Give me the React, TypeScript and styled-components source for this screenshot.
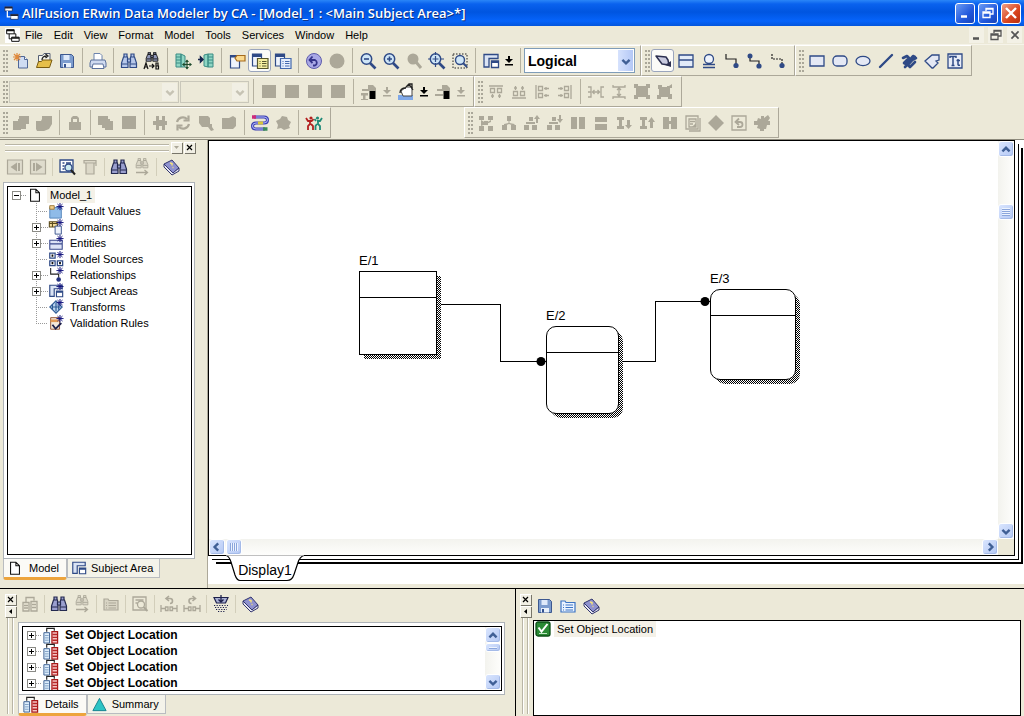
import React from "react";
import styled, { createGlobalStyle, css } from "styled-components";

const FACE = "#ece9d8";
const NAVY = "#2f4a86";
const DIM = "#aca899";
const UI = '"Liberation Sans", Arial, sans-serif';

const Global = createGlobalStyle`
  *, *::before, *::after { box-sizing: border-box; }
  body { margin: 0; background: ${FACE}; color: #000; font: 11px/16px ${UI}; }
  button, select { font: inherit; color: inherit; margin: 0; padding: 0; border: 0; background: none; }
  svg { display: block; flex: none; }
  ul { list-style: none; margin: 0; padding: 0; }
`;

/* ---------- icons ---------- */

const dimLine = { fill: "none", stroke: DIM, strokeWidth: 1.3 };
const binoculars = (c: string, fill: string) => (
  <g fill={fill} stroke={c} strokeWidth="1.2">
    <path d="M4 2h3v3H4zM11 2h3v3h-3zM3.500 5h4l.5 5v5.500H1.500V11zM10.500 5h4l2 6v4.500H10V10z" />
    <path d="M7.500 7h3v3h-3zM2 12h6M10 12h6.500" />
  </g>
);
const book = (
  <g>
    <path d="M2 6l8-4 7 8-6 5z" fill="#8f92cf" stroke="#33366e" />
    <path d="M2 6v3l8 8 7-4v-3l-6 5z" fill="#e8e8f4" stroke="#33366e" />
    <path d="M8 5l2 .5v2M10.500 9.500h1" stroke="#f5e27a" strokeWidth="1.5" fill="none" />
  </g>
);
const page = <path d="M4 2.500h6l4 4V16H4zM10 2.500v4h4" fill="#fff" stroke="#111" strokeWidth="1.2" />;
const subject = (
  <g>
    <path d="M2 2.500h14v4H7V15H2z" fill="#dbe4f4" stroke={NAVY} strokeWidth="1.3" />
    <path d="M9.500 9h7v6.500h-7z" fill="#fff" stroke={NAVY} strokeWidth="1.3" />
    <path d="M9.500 9h7v2h-7z" fill={NAVY} />
  </g>
);
const star = <path d="M13.500 0v8M9.500 4h8M10.700 1.200l5.600 5.600M16.300 1.200l-5.600 5.600" stroke="#11117c" strokeWidth="1.1" />;
const floppy = (
  <g>
    <path d="M2.500 2.500h11l2 2v11h-13z" fill="#7c9cce" stroke="#3d588f" />
    <path d="M5.500 3h6v5h-6z" fill="#dfeafa" />
    <path d="M5 11h8v4.500H5z" fill="#e9f1fb" />
    <path d="M6 12h2v3.500H6z" fill="#33518f" />
  </g>
);
const blobA = <path d="M1 7h5V5h1V2h10v8h-3v5H9v1H1z" fill={DIM} />;
const blobB = <path d="M1 7h5l1-2V2h10v8l-3 5-5 2H2l-1-2z" fill={DIM} />;
const lens = (c: string, fill: string, extra?: React.ReactNode) => (
  <g>
    <path d="M11 11l5.500 5.500" stroke={c} strokeWidth="2.600" />
    <circle cx="7.500" cy="7" r="5.200" fill={fill} stroke={c} strokeWidth="1.500" />
    {extra}
  </g>
);
const listDoc = (frame: string, fill: string) => (
  <g>
    <path d="M6.500 6.500h10.500v10H6.500z" fill={fill} stroke={frame} strokeWidth="1.2" />
    <path d="M8.500 9.500h1M11 9.500h4.500M8.500 11.500h1M11 11.500h4.500M8.500 14h1M11 14h4.500" stroke={frame} />
  </g>
);
const folderList = (c: string, fill: string) => (
  <g>
    <path d="M2 4h4l1 1.500h9V15H2z" fill={fill} stroke={c} strokeWidth="1.2" />
    <path d="M4 8h1M6.500 8h7.500M4 10.500h1M6.500 10.500h7.500M4 13h1M6.500 13h7.500" stroke={c} />
  </g>
);

const ICONS: Record<string, React.ReactNode> = {
  app: (
    <g>
      <path d="M2 2h9v5H2zM8 11h9v5H8z" fill="#fff" stroke="#111" strokeWidth="1.2" />
      <path d="M2 2h9v2H2zM8 11h9v2H8z" fill="#111" />
      <path d="M5 7v6h3M13 11V7h-2" fill="none" stroke="#111" strokeWidth="1.2" />
    </g>
  ),
  appLight: (
    <g>
      <path d="M1 1h9v5H1zM8 10h9v6H8z" fill="#fff" stroke="#16306e" />
      <path d="M1 1h9v2H1zM8 10h9v2H8z" fill="#223" />
      <path d="M4 6v7h4" fill="none" stroke="#fff" strokeWidth="1.500" />
    </g>
  ),
  newDoc: (
    <g>
      <path d="M6.500 4.500h6l3 3v8.500h-9z" fill="#cfdcf2" stroke="#4f6796" />
      <path d="M12.500 4.500v3h3" fill="#fff" stroke="#4f6796" />
      <path d="M5 1v8M1 5h8M2 2l6 6M8 2L2 8" stroke="#e08a3c" strokeWidth="1.200" />
    </g>
  ),
  open: (
    <g>
      <path d="M3.500 15V3.500h4l1.500-2h6V9" fill="#f6f6ee" stroke="#555f74" />
      <path d="M1.500 15.500l2-6h3l1-1.500h9.500l-2.500 7.500z" fill="#e6bf4a" stroke="#7a5c10" />
      <path d="M7 8c0-2.500 2-4 4.500-4M10.500 2L13 4l-2.500 2" fill="none" stroke="#222" strokeWidth="1.300" />
    </g>
  ),
  save: floppy,
  print: (
    <g>
      <path d="M5 8V1.500h6l2 2V8" fill="#fff" stroke="#6d84ad" />
      <path d="M2 8h14l1 3v4H1v-4z" fill="#cfdaf0" stroke="#5b719c" />
      <path d="M4 12h10l1 4.500H3z" fill="#fff" stroke="#5b719c" />
    </g>
  ),
  find: binoculars(NAVY, "#b7c8ea"),
  findDark: binoculars("#24294f", "#9a9fcf"),
  replace: (
    <g>
      <g transform="translate(2 -1) scale(.78 .66)">{binoculars("#111", "#8f97b8")}</g>
      <path d="M1 17l2-6 2 6M2 15h2M13 11v6h2.500v-3H13h2v-3zM6 14h5M9 12l2 2-2 2" fill="none" stroke="#111" strokeWidth="1.200" />
    </g>
  ),
  tableAdd: (
    <g>
      <path d="M2 2h5v13H2zM7 2l4 2v11H7z" fill="#8fd6c4" stroke="#3a8c84" />
      <path d="M2 5h5M2 8h5M2 11h5" stroke="#3a8c84" />
      <path d="M13 8.500v8M9 12.500h8" stroke="#1d4a2c" strokeWidth="1.200" />
      <path d="M11 10l2-2.500 2 2.500zM11 15l2 2.500 2-2.500zM10.500 10.500L8 12.500l2.500 2zM15.500 10.500l2.500 2-2.500 2z" fill="#1d4a2c" />
    </g>
  ),
  tableIn: (
    <g>
      <path d="M7 3l4-1v13l-4-1zM11 2h5v13h-5z" fill="#8fd6c4" stroke="#3a8c84" />
      <path d="M11 5h5M11 8h5M11 11h5" stroke="#3a8c84" />
      <path d="M1 7.500h5M3.500 5L6 7.500 3.500 10z" fill="#16244c" stroke="#16244c" strokeWidth="1.500" />
    </g>
  ),
  tagDoc: (
    <g>
      <path d="M2.500 3.500h9V16h-9z" fill="#eef3fc" stroke={NAVY} strokeWidth="1.200" />
      <path d="M2.500 3.500h9v2h-9z" fill={NAVY} />
      <path d="M7 6l2-2.500h8v5.500H9z" fill="#fbd98c" stroke="#a56a1c" strokeWidth="1.200" />
    </g>
  ),
  docYellow: (
    <g>
      <path d="M1.500 2h9v12h-9z" fill="#eef3fc" stroke={NAVY} strokeWidth="1.200" />
      <path d="M1.500 2h9v3h-9z" fill={NAVY} />
      {listDoc("#55552c", "#f6efa0")}
    </g>
  ),
  docBlue: (
    <g>
      <path d="M1.500 2h9v12h-9z" fill="#eef3fc" stroke={NAVY} strokeWidth="1.200" />
      <path d="M1.500 2h9v3h-9z" fill={NAVY} />
      {listDoc("#4469ae", "#e6effd")}
    </g>
  ),
  undo: (
    <g>
      <circle cx="9" cy="9" r="7.500" fill="#a9a8e6" stroke="#5e5cac" />
      <path d="M5 8h5a3 3 0 010 5.500H8M7.500 4.500L4.500 8l3 3" fill="none" stroke="#35338a" strokeWidth="1.800" />
    </g>
  ),
  dot: <circle cx="9" cy="9" r="7.500" fill={DIM} />,
  zoomOut: lens(NAVY, "#cfe6f7", <path d="M5 7h5" stroke={NAVY} strokeWidth="1.600" />),
  zoomIn: lens(NAVY, "#cfe6f7", <path d="M5 7h5M7.500 4.500v5" stroke={NAVY} strokeWidth="1.600" />),
  zoomDim: (
    <g>
      <path d="M11 10l5 6" stroke={DIM} strokeWidth="3" />
      <circle cx="8" cy="7" r="5.500" fill={DIM} />
    </g>
  ),
  zoomFit: lens(NAVY, "#cfe6f7", <path d="M4.500 7h6M7.500 4v6M7.500 0v3M7.500 11v4M0 7h3M12 7h4" stroke={NAVY} strokeWidth="1.200" />),
  zoomArea: (
    <g>
      <path d="M2 2h14v14H2z" fill="none" stroke="#222" strokeDasharray="1.500 1.500" />
      <circle cx="9" cy="8" r="4.500" fill="#cfe6f7" stroke={NAVY} strokeWidth="1.400" />
      <path d="M12 11l4 4" stroke={NAVY} strokeWidth="2" />
    </g>
  ),
  subject,
  pointer: (
    <g>
      <path d="M2 4l10 1 2 3 1 5-7-1z" fill="#c9cbe0" stroke="#2c3050" strokeWidth="1.500" strokeLinejoin="round" />
      <path d="M11 13l6-4v6z" fill="#2c3050" />
    </g>
  ),
  entity: (
    <g>
      <path d="M2 3h14v12H2z" fill="#e3ebf8" stroke={NAVY} strokeWidth="1.300" />
      <path d="M2 8h14" stroke={NAVY} strokeWidth="1.500" />
    </g>
  ),
  category: (
    <g>
      <circle cx="9" cy="7" r="4.500" fill="#eef3fc" stroke={NAVY} strokeWidth="1.300" />
      <path d="M3 12.500h12M3 15.500h12" stroke={NAVY} strokeWidth="1.400" />
    </g>
  ),
  relation: (
    <g>
      <path d="M3 2v5h10v5" fill="none" stroke="#222" strokeWidth="1.200" />
      <circle cx="13" cy="13.500" r="2.600" fill={NAVY} />
    </g>
  ),
  relationMany: (
    <g>
      <path d="M4 4v5h9v4" fill="none" stroke="#222" strokeWidth="1.200" />
      <circle cx="4" cy="4" r="2.500" fill={NAVY} />
      <circle cx="13" cy="14" r="2.600" fill={NAVY} />
    </g>
  ),
  relationDash: (
    <g>
      <path d="M3 2v5h10v5" fill="none" stroke="#222" strokeWidth="1.200" strokeDasharray="2 1" />
      <circle cx="13" cy="13.500" r="2.600" fill={NAVY} />
    </g>
  ),
  rect: <path d="M2 4h14v10H2z" fill="#e4e8f4" stroke={NAVY} strokeWidth="1.300" />,
  roundRect: <rect x="2" y="4" width="14" height="10" rx="4" fill="#e4e8f4" stroke={NAVY} strokeWidth="1.300" />,
  ellipse: <ellipse cx="9" cy="9" rx="7" ry="4.600" fill="#e4e8f4" stroke={NAVY} strokeWidth="1.300" />,
  stroke: <path d="M3 15L15 3" stroke={NAVY} strokeWidth="2.400" strokeLinecap="round" />,
  scribble: <path d="M3 6l4-2 2 2-5 5 2 1 7-8 2 1-7 8 2 2 5-5M5 15l3-3M12 8l4-2" stroke={NAVY} strokeWidth="2.600" strokeLinecap="round" strokeLinejoin="round" fill="none" />,
  polygon: <path d="M2 9l7-6 7 0v5l-3 1 2 2-5 5h-1z" fill="#e4e8f4" stroke={NAVY} strokeWidth="1.300" />,
  textBox: (
    <g>
      <path d="M2 2h14v14H2z" fill="#e8ecf7" stroke={NAVY} strokeWidth="1.300" />
      <path d="M4 6V4.500h6V6M7 4.500V13M5.500 13.500h3M12 7v5.500q0 1 2 .8M10.500 8.500H14" fill="none" stroke={NAVY} strokeWidth="1.500" />
    </g>
  ),
  square: <path d="M2 2h14v13H2z" fill={DIM} />,
  textColor: (
    <g>
      <path d="M8 2h5l3 3v3H8zM2 6h8v2H2zM1 10h7v2.500H5.500V16H8v1H1v-1h2v-3.500H1z" fill={DIM} />
      <path d="M9.500 8h6v8h-6z" fill="#000" />
    </g>
  ),
  fillColor: (
    <g>
      <path d="M1 12h15v5H1z" fill="#7fa8e8" />
      <path d="M4 8l5-4h6v9H6z" fill="#fff" stroke="#444" />
      <path d="M3 10c0-4 3-5 6-5M9 4l3-3h3v5M12 1l4 6" fill="none" stroke="#222" strokeWidth="1.300" />
    </g>
  ),
  lineColor: (
    <g>
      <path d="M8 2h5l3 3v3H8zM3 6h8v2H3zM1 11h8v2H1z" fill={DIM} />
      <path d="M9.500 8h6v8h-6z" fill="#000" />
    </g>
  ),
  alignTop: <path d="M2 3h14M3.500 5.500h4v4h-4zM10.500 5.500h4v4h-4zM5.500 11v4M12.500 11v4M4 13h3M11 13h3" {...dimLine} />,
  alignBottom: <path d="M2 15h14M3.500 8.500h4v4h-4zM10.500 8.500h4v4h-4zM5.500 3v4M12.500 3v4M4 5h3M11 5h3" {...dimLine} />,
  alignLeft: <path d="M3 2v14M5.500 3.500h4v4h-4zM5.500 10.500h4v4h-4zM11 5.500h5M11 12.500h5M13 4v3M13 11v3" {...dimLine} />,
  alignRight: <path d="M15 2v14M8.500 3.500h4v4h-4zM8.500 10.500h4v4h-4zM2 5.500h5M2 12.500h5M5 4v3M5 11v3" {...dimLine} />,
  spaceH: <path d="M1 4h3v10H1M1 9h3M17 4h-3v10h3M6 9h6M7.500 7L5.500 9l2 2M10.500 7l2 2-2 2" {...dimLine} />,
  spaceV: <path d="M3 2v2h12V2M3 16v-2h12v2M9 5v8M7 7l2-2 2 2M7 11l2 2 2-2" {...dimLine} />,
  group: <path d="M1 1h4v2h8V1h4v4h-2v7h2v4h-4v-2H5v2H1v-4h2V5H1z" fill={DIM} />,
  ungroup: <path d="M2 2h4v2h5V3h2l3-2v4h-2v6h2v5h-4v-2H5v2H1v-4h2V6H2z" fill={DIM} />,
  blobA,
  blobB,
  lock: <path d="M3 8h2V4l2-2h4l2 2v4h2v8H3zM7 8h4V5H7z" fill={DIM} fillRule="evenodd" />,
  overlap: <path d="M1 2h10v3h2v2h3v9H8v-2H5v-3H1z" fill={DIM} />,
  hash: <path d="M5 2h3v4h3V2h3v5h2v4h-2v5h-3v-4H8v4H5v-5H2V7h3z" fill={DIM} />,
  refresh: <path d="M3 8a6 6 0 0110-3M15 10a6 6 0 01-10 3M14.500 1.500v5h-5M3.500 16.500v-5h5" fill="none" stroke={DIM} strokeWidth="2.200" />,
  blobC: <path d="M2 2h9l2 2v6h2v3l2 3-3 1-3-4H5L2 9z" fill={DIM} />,
  blobD: <path d="M2 4h7l4-2 3 2v8l-3 3H2z" fill={DIM} />,
  blobE: <path d="M2 7l4-2 2-3 5 1 1 3 3 2-2 4 1 2-6 2-3-2-4 1 1-4z" fill={DIM} />,
  snake: (
    <g fill="none">
      <path d="M3 3h10q3.500 0 3.500 3T13 9H5q-3.500 0-3.500 3T5 15h9" stroke="#3a3fb0" strokeWidth="3" />
      <path d="M3 3h10q3.500 0 3.500 3T13 9H5q-3.500 0-3.500 3T5 15h9" stroke="#b4b9ff" strokeWidth="1" />
      <path d="M1 3h4" stroke="#cf2a7a" strokeWidth="3.500" />
      <path d="M7 9h5" stroke="#d8c63a" strokeWidth="3" />
      <path d="M12 15h4.500" stroke="#3c8a5a" strokeWidth="3.500" />
    </g>
  ),
  people: (
    <g>
      <circle cx="6" cy="4" r="1.600" fill="#b32020" />
      <circle cx="12.500" cy="4" r="1.600" fill="#1f8a78" />
      <path d="M1 4l2 3h4M5 6v4l-2 2v4M6 10l2 2v4M7 7l1.500-2" stroke="#b32020" strokeWidth="1.800" fill="none" />
      <path d="M17 4l-2 3h-3M13 6v4l2 2v4M12 10l-1.500 2v4M11 7L9.500 5" stroke="#1f8a78" strokeWidth="1.800" fill="none" />
    </g>
  ),
  treeBig: <path d="M2 2h5v4H2zM11 2h5v4h-5zM7 7h4v4H7zM2 12h5v5H2zM11 12h5v5h-5zM4 6l5 3 5-3v2l-5 2-5 2z" fill={DIM} />,
  tree: <path d="M7 2h4v5H7zM2 11h5v5H2zM11 11h5v5h-5zM8.500 7h1v2l5 1v2l-5.500-2L4 12v-2l4.500-1z" fill={DIM} />,
  treeUp: <path d="M6 3h4v4H6zM1 11h5v5H1zM9 11h5v5H9zM3 8h9v2H3zM14 1l3 4h-2v4h-2V5h-2z" fill={DIM} />,
  treeDown: <path d="M6 3h4v4H6zM1 11h5v5H1zM9 11h5v5H9zM3 8h9v2H3zM13 1h2v4h2l-3 4-3-4h2z" fill={DIM} />,
  colsTwo: <path d="M2 3h6v12H2zM10 3h6v12h-6z" fill={DIM} />,
  rowsTwo: <path d="M3 3h12v5H3zM3 10h12v6H3z" fill={DIM} />,
  colDown: <path d="M2 3h7v3H7v6h2v3H2v-3h2V6H2zM12 6h3v5h2l-3.500 4L10 11h2z" fill={DIM} />,
  colUp: <path d="M2 3h7v3H7v6h2v3H2v-3h2V6H2zM12 14h3V8h2l-3.500-5L10 8h2z" fill={DIM} />,
  beam: <path d="M2 3h6v4h2V3h6v12h-6v-5H8v5H2z" fill={DIM} />,
  note: (
    <g>
      <path d="M2 2h12v13H2zM5 5h7v8H5zM6 7.500h5M6 10h3M16 4v13H5" {...dimLine} />
      <path d="M8 13l4-4v4z" fill={DIM} />
    </g>
  ),
  diamond: <path d="M9 1l8 8-8 8-8-8z" fill={DIM} />,
  back: (
    <g>
      <path d="M2 2h14v14H2z" {...dimLine} />
      <path d="M7 13h3q2.500 0 2.500-2.500T10 8H6M9 4.500L5.500 8 9 11" fill="none" stroke={DIM} strokeWidth="1.800" />
    </g>
  ),
  cross: <path d="M8 2h3v2l4-3 2 3-2 3h2v4h-3l-1 4h-2v2H7v-2L4 14l1-3H1V7h3l1-3 3 1z" fill={DIM} />,
  prev: (
    <g>
      <path d="M1.500 2h15v14h-15z" fill="#dfdccd" stroke={DIM} strokeWidth="1.200" />
      <path d="M11 4.500v9L4.500 9zM12 5h2v8h-2z" fill={DIM} />
    </g>
  ),
  next: (
    <g>
      <path d="M1.500 2h15v14h-15z" fill="#dfdccd" stroke={DIM} strokeWidth="1.200" />
      <path d="M7 4.500v9L13.500 9zM4 5h2v8H4z" fill={DIM} />
    </g>
  ),
  inspect: (
    <g>
      <path d="M2 2h13v12H2zM4.500 5h2M8 5h5M4.500 8h2M4.500 11h2" fill="#fff" stroke={NAVY} strokeWidth="1.300" />
      <circle cx="10.500" cy="9.500" r="3.500" fill="#cdebf0" stroke={NAVY} strokeWidth="1.300" />
      <path d="M13 12l4 4.500" stroke="#222" strokeWidth="2" />
    </g>
  ),
  trash: <path d="M3 2.500h12v2.500H3zM5 5.500V16h8V5.500M15 5v3" fill="#dcd8c8" stroke={DIM} strokeWidth="1.200" />,
  findNext: (
    <g>
      <g transform="translate(2 -1) scale(.78 .7)">{binoculars(DIM, "#dcd8c8")}</g>
      <path d="M3 14.500h11M11.500 12l3 2.500-3 2.500" {...dimLine} />
    </g>
  ),
  book,
  page,
  copyPair: <path d="M2 7.500h6V16H2zM10 6.500h6V16h-6zM5 7V2.500h8v3M3 10.500h4M3 13h4M11 9.500h4M11 12.500h4" {...dimLine} />,
  listDim: folderList(DIM, "#d8d4c4"),
  inspectDim: (
    <g>
      <path d="M2 2h13v13H2zM4.500 5h8M4.500 8h2" {...dimLine} />
      <circle cx="10" cy="9.500" r="3.500" {...dimLine} />
      <path d="M12.500 12l4 4" stroke={DIM} strokeWidth="2" />
    </g>
  ),
  undoDim: (
    <g>
      <path d="M1 10v7M17 10v7M1 13.500h4M13 13.500h4M5.500 12h2.500v3.500H5.500zM10 12h2.500v3.500H10z" {...dimLine} />
      <path d="M9 1L6 3.500 9 6M6.500 3.500H10q2.500 0 2.500 2.500T10 8.500" fill="none" stroke={DIM} strokeWidth="1.600" />
    </g>
  ),
  redoDim: (
    <g>
      <path d="M1 10v7M17 10v7M1 13.500h4M13 13.500h4M5.500 12h2.500v3.500H5.500zM10 12h2.500v3.500H10z" {...dimLine} />
      <path d="M9.500 1l3 2.500-3 2.500M12 3.500H8.500Q6 3.500 6 6t2.500 2.500" fill="none" stroke={DIM} strokeWidth="1.600" />
    </g>
  ),
  filter: (
    <g>
      <path d="M2 2.500h14l-2.500 5.500h-9z" fill="#a9b0d4" stroke="#1c1f4a" strokeWidth="1.200" />
      <path d="M9 0v7M6.500 4.500L9 7l2.500-2.500" fill="none" stroke="#1c1f4a" strokeWidth="1.300" />
      <path d="M2 10.500h14M3 12.500h12M4 14.500h11M6 16.500h7" stroke="#1c1f4a" strokeDasharray="1.200 1.400" />
    </g>
  ),
  folderBlue: folderList("#3d74c4", "#eaf3ff"),
  change: (
    <g>
      <path d="M2 6h6v11H2z" fill="#dcecfb" stroke="#3a5f92" />
      <path d="M3 9h4M3 11.500h4M3 14h4" stroke="#7f9fc4" />
      <path d="M10.500 5h6v12h-6z" fill="#f6c4c4" stroke="#a81818" strokeWidth="1.300" />
      <path d="M11 8h5M11 11h5M11 14h5" stroke="#b82828" strokeWidth="1.500" />
      <path d="M5 5V1.500h8V4" fill="none" stroke="#222" strokeWidth="1.200" />
    </g>
  ),
  triangle: <path d="M9 2.500l7 13H2z" fill="#2cc4c4" stroke="#15808c" />,
  check: (
    <g>
      <rect x="2" y="2" width="14" height="14" rx="2" fill="#2a8a34" stroke="#0d4f16" strokeWidth="1.300" />
      <path d="M4.500 7.500l3 4 6-7.500" fill="none" stroke="#fff" strokeWidth="2" />
      <path d="M5 13.500h8" stroke="#bfe6c2" />
    </g>
  ),
  defaults: (
    <g>
      <path d="M2 5h13v12H2z" fill="#8fbbe8" stroke="#4f7fb8" />
      <path d="M2 3h5v4H2z" fill="#f2d08c" stroke="#9a7430" />
      {star}
    </g>
  ),
  domains: (
    <g>
      <path d="M1.500 3h9v6h-9zM1.500 5h9M5 3v6" fill="#f3dc9a" stroke="#5a4a1c" strokeWidth="1.200" />
      <path d="M8 8h7v9H8z" fill="#eef3fc" stroke={NAVY} />
      {star}
    </g>
  ),
  entities: (
    <g>
      <path d="M2 6h14v10H2zM2 10h14" fill="#dce3f6" stroke="#39488c" strokeWidth="1.200" />
      {star}
    </g>
  ),
  sources: (
    <g>
      <path d="M2 2.500h6v5.500H2zM2 11h6v5.500H2zM10.500 11h6v5.500h-6z" fill="#fff" stroke={NAVY} strokeWidth="1.400" />
      <path d="M4 4h2v2.500H4zM4 12.500h2v2.500H4zM12.500 12.500h2v2.500h-2z" fill="#111" />
      {star}
    </g>
  ),
  relations: (
    <g>
      <path d="M3 1v7h9v4" fill="none" stroke="#222" strokeWidth="1.200" />
      <circle cx="12" cy="14" r="2.600" fill="#22307c" />
      {star}
    </g>
  ),
  areas: (
    <g>
      {subject}
      {star}
    </g>
  ),
  transforms: (
    <g>
      <path d="M9 2l7 7-7 7-7-7z" fill="#bcd6f0" stroke="#2c5a94" strokeWidth="1.200" />
      <path d="M4 9h10M9 4v10M5 6v6M12 7v5" stroke="#2c5a94" strokeWidth="1.300" />
      {star}
    </g>
  ),
  rules: (
    <g>
      <path d="M3 3h10v13H3z" fill="#f3e8dc" stroke="#8a4a2a" />
      <path d="M3 5h9v3H3z" fill="#e29a56" />
      <path d="M5 11l3.500 4.500L15 9" fill="none" stroke="#1c1f4a" strokeWidth="2" />
      {star}
    </g>
  ),
};

const Icon = ({ name, size = 18 }: { name: string; size?: number }) => (
  <svg width={size} height={size} viewBox="0 0 18 18" aria-hidden="true">
    {ICONS[name]}
  </svg>
);

const ARROWS = { up: "M2 7l3-3 3 3", down: "M2 4l3 3 3-3", left: "M6 2L3 5l3 3", right: "M4 2l3 3-3 3" };
const Chevron = ({ to, color = "#3f5f95" }: { to: keyof typeof ARROWS; color?: string }) => (
  <svg width="12" height="12" viewBox="0 0 10 10" aria-hidden="true">
    <path d={ARROWS[to]} fill="none" stroke={color} strokeWidth="2" />
  </svg>
);
const DropMark = ({ color }: { color: string }) => (
  <svg width="8" height="10" viewBox="0 0 8 10" aria-hidden="true">
    <path d="M3 0h2v3h3L4 7 0 3h3zM0 8h8v1.500H0z" fill={color} />
  </svg>
);

/* ---------- window frame ---------- */

const Shell = styled.div`
  display: flex;
  flex-direction: column;
  height: 100vh;
  overflow: hidden;
`;

const TitleBar = styled.header`
  display: flex;
  align-items: center;
  gap: 3px;
  height: 26px;
  padding: 0 3px 0 4px;
  color: #fff;
  background: linear-gradient(#2a86f8 0, #0a62ee 4px, #0055e0 12px, #0664fb 21px, #0456dc 26px);
`;

const Title = styled.h1`
  flex: 1;
  margin: 0;
  font: 600 13px/20px "Open Sans", "Noto Sans", sans-serif;
  white-space: nowrap;
  text-shadow: 1px 1px 0 #0b2f80;
`;

const FrameButton = styled.button<{ $danger?: boolean }>`
  display: grid;
  place-items: center;
  width: 20px;
  height: 21px;
  border: 1px solid #fff;
  border-radius: 3px;
  background: ${(p) => (p.$danger ? "linear-gradient(135deg, #f0a088, #d8431c 60%, #b83010)" : "linear-gradient(135deg, #6c9cf4, #2158dc 60%, #1844b8)")};
`;

const MenuBar = styled.nav`
  display: flex;
  align-items: center;
  height: 19px;
  padding: 0 2px 0 5px;
  border-bottom: 1px solid #f6f4ea;
`;

const MenuIcon = styled.span`
  background: #fff;
`;

const MenuItem = styled.button`
  padding: 0 6px 0 5px;
`;

const ChildButtons = styled.div`
  display: flex;
  gap: 4px;
  margin-left: auto;
`;

const ChildButton = styled.button`
  display: grid;
  place-items: center;
  width: 15px;
  height: 16px;
  background: #f3f1e6;
`;

/* ---------- toolbars ---------- */

const BarRow = styled.div`
  display: flex;
  height: 31px;
`;

const Band = styled.div<{ $offset?: number }>`
  display: flex;
  align-items: center;
  height: 31px;
  margin-left: ${(p) => p.$offset ?? 0}px;
  padding: 0 5px 0 3px;
  border-right: 1px solid #aca899;
  border-bottom: 1px solid #aca899;
  border-top: 1px solid #fff;
  & + & { border-left: 1px solid #fff; }
`;

const Grip = styled.span`
  width: 5px;
  height: 22px;
  margin-right: 1px;
  background-image: radial-gradient(circle at 1px 1px, #aaa799 1px, transparent 1px);
  background-size: 3px 4px;
`;

const Tool = styled.button<{ $on?: boolean; $narrow?: boolean }>`
  display: grid;
  place-items: center;
  flex: none;
  width: ${(p) => (p.$narrow ? 14 : 23)}px;
  height: 23px;
  ${(p) => p.$on && css`
    background: #fbfbf8;
    border: 1px solid #9aa5bd;
    border-radius: 3px;
  `}
`;

const Rule = styled.span<{ $tight?: boolean }>`
  flex: none;
  width: 1px;
  height: ${(p) => (p.$tight ? 18 : 25)}px;
  margin: 0 ${(p) => (p.$tight ? "2px 0 3px" : "3px 0 4px")};
  background: ${(p) => (p.$tight ? "#d2ceba" : "#b5b1a0")};
`;

const Combo = styled.label<{ $w: number; $off?: boolean }>`
  display: flex;
  align-items: center;
  flex: none;
  width: ${(p) => p.$w}px;
  height: ${(p) => (p.$off ? 22 : 25)}px;
  padding: 1px;
  border: 1px solid ${(p) => (p.$off ? "#c9c7ba" : "#7f9db9")};
  background: ${(p) => (p.$off ? FACE : "#fff")};
  & + & { margin-left: 1px; }
  select {
    flex: 1;
    min-width: 0;
    height: 100%;
    padding-left: 2px;
    appearance: none;
    outline: 0;
    opacity: 1;
    font: bold 14px/20px ${UI};
  }
`;

const ComboArrow = styled.span<{ $off?: boolean }>`
  display: grid;
  place-items: center;
  width: 15px;
  height: 100%;
  pointer-events: none;
  background: ${(p) => (p.$off ? "#f1efe4" : "linear-gradient(90deg, #d6e2fd, #b4c8f6)")};
`;

/* "|" is a separator, "v" a drop-down mark (grey when "v-"), a trailing "*" marks the pressed tool */
const Tools = ({ items, tight }: { items: string[]; tight?: boolean }) => (
  <>
    {items.map((it, i) => {
      if (it === "|") return <Rule key={i} $tight={tight} />;
      if (it === "v" || it === "v-")
        return (
          <Tool key={i} $narrow aria-label="More options">
            <DropMark color={it === "v" ? "#000" : DIM} />
          </Tool>
        );
      const name = it.replace("*", "");
      return (
        <Tool key={i} $on={it.endsWith("*")} aria-label={name}>
          <Icon name={name} />
        </Tool>
      );
    })}
  </>
);

/* ---------- workspace ---------- */

const Workspace = styled.main`
  display: flex;
  flex: 1;
  min-height: 0;
  margin-top: 1px;
  border-top: 1px solid #8d8a7c;
`;

const Explorer = styled.aside`
  display: flex;
  flex-direction: column;
  flex: none;
  width: 208px;
  padding: 1px 12px 8px 3px;
  border-right: 1px solid #aca899;
`;

const DockHeader = styled.div`
  display: flex;
  align-items: center;
  gap: 2px;
  height: 12px;
  padding-left: 2px;
`;

const DockGrip = styled.span`
  flex: 1;
  height: 7px;
  border: 1px solid #b9b5a5;
  border-width: 1px 0;
  box-shadow: inset 0 1px 0 #fff, 0 1px 0 #fff;
`;

const TinyButton = styled.button`
  display: grid;
  place-items: center;
  width: 11px;
  height: 11px;
  background: #f1efe4;
  box-shadow: 1px 1px 0 #77756a, inset 1px 1px 0 #fff;
`;

const PaneTools = styled.div<{ $h: number; $gap?: number }>`
  display: flex;
  align-items: center;
  flex: none;
  height: ${(p) => p.$h}px;
  margin-bottom: ${(p) => p.$gap ?? 0}px;
`;

const Well = styled.div<{ $grow?: boolean }>`
  display: flex;
  flex: ${(p) => (p.$grow ? 1 : "none")};
  min-height: 0;
  padding: 3px 2px 3px 3px;
  background: #fff;
  border: 1px solid #aeb3b8;
`;

const WellInner = styled.div<{ $h?: number }>`
  display: flex;
  flex: 1;
  height: ${(p) => (p.$h ? `${p.$h}px` : "auto")};
  overflow: hidden;
  border: 1px solid #000;
`;

const Tree = styled.ul`
  flex: 1;
  padding-left: 4px;
`;

const Children = styled.ul`
  margin: 0 0 0 24px;
  background: repeating-linear-gradient(#999 0 1px, transparent 1px 2px) 0 0 / 1px 120px no-repeat;
`;

const TreeRow = styled.li<{ $bold?: boolean }>`
  display: flex;
  align-items: center;
  height: 16px;
  font-weight: ${(p) => (p.$bold ? "bold" : "normal")};
  font-size: ${(p) => (p.$bold ? 12 : 11)}px;
  white-space: nowrap;
`;

const Twisty = styled.button`
  display: grid;
  place-items: center;
  flex: none;
  width: 9px;
  height: 9px;
  border: 1px solid #8b8b86;
  background: #fff;
`;

const Leader = styled.span<{ $w: number }>`
  flex: none;
  width: ${(p) => p.$w}px;
  height: 1px;
  background: repeating-linear-gradient(90deg, #999 0 1px, transparent 1px 2px);
`;

const Label = styled.span<{ $mark?: boolean }>`
  padding: 0 3px;
  background: ${(p) => (p.$mark ? "#f4f1e8" : "transparent")};
`;

const ChildCell = styled.span`
  display: flex;
  align-items: center;
  justify-content: flex-end;
  flex: none;
  width: 16px;
  margin-left: -4px;
`;

const Tabs = styled.div`
  display: flex;
  align-items: flex-start;
`;

const Tab = styled.button<{ $on?: boolean }>`
  display: flex;
  align-items: center;
  gap: 4px;
  height: 19px;
  padding: 0 6px 0 3px;
  border: 1px solid #b9bcc0;
  border-top: 0;
  background: #f4f3ea;
  ${(p) => p.$on && css`
    gap: 6px;
    height: 21px;
    padding-right: 7px;
    background: #fbfaf6;
    border-bottom: 3px solid #eda43c;
    border-radius: 0 0 3px 3px;
  `}
`;

/* ---------- diagram ---------- */

const Stage = styled.section`
  display: flex;
  flex-direction: column;
  flex: 1;
  min-width: 0;
  margin-bottom: 4px;
  background: #fff;
`;

const Sheet = styled.div`
  display: grid;
  grid-template-columns: 1fr 16px;
  grid-template-rows: 1fr 16px;
  flex: 1;
  min-height: 0;
  margin-right: 9px;
  border: 1px solid #000;
  background: #fff;
  box-shadow: 3px 3px 0 #fff, 4px 4px 0 #000, 6px 6px 0 #fff, 8px 8px 0 #000;
`;

const Canvas = styled.div`
  position: relative;
  overflow: hidden;
`;

const Links = styled.svg`
  position: absolute;
  left: 0;
  top: 0;
`;

const Entity = styled.div<{ $x: number; $y: number; $w: number; $h: number; $round?: boolean }>`
  position: absolute;
  left: ${(p) => p.$x}px;
  top: ${(p) => p.$y}px;
  width: ${(p) => p.$w}px;
  height: ${(p) => p.$h}px;
  &::before {
    content: "";
    position: absolute;
    inset: 5px -4px -4px 5px;
    border-radius: ${(p) => (p.$round ? 10 : 0)}px;
    background: repeating-conic-gradient(#000 0 25%, #fff 0 50%) 0 0 / 2px 2px;
  }
`;

const EntityBox = styled.div<{ $round?: boolean }>`
  position: relative;
  height: 100%;
  overflow: hidden;
  border: 1px solid #000;
  border-radius: ${(p) => (p.$round ? 10 : 0)}px;
  background: linear-gradient(#000, #000) 0 25px / 100% 1px no-repeat #fff;
`;

const EntityName = styled.span`
  position: absolute;
  left: 0;
  bottom: 100%;
  font-size: 13px;
  line-height: 20px;
`;

const ScrollV = styled.div`
  display: flex;
  flex-direction: column;
  width: 16px;
  background: linear-gradient(90deg, #f3f3ee, #fefefc);
`;

const ScrollH = styled.div`
  display: flex;
  background: linear-gradient(#f3f3ee, #fefefc);
`;

const ScrollButton = styled.button`
  display: grid;
  place-items: center;
  flex: none;
  width: 16px;
  height: 16px;
  border: 1px solid #fff;
  border-radius: 3px;
  background: linear-gradient(135deg, #d9e5fe, #b4c8f4);
  box-shadow: inset -1px -1px 0 #a5bbe8;
`;

const Space = styled.span<{ $size?: number }>`
  flex: ${(p) => (p.$size ? `0 0 ${p.$size}px` : "1")};
`;

const Thumb = styled(ScrollButton)<{ $h?: number; $across?: boolean }>`
  height: ${(p) => p.$h ?? 16}px;
  &::after {
    content: "";
    width: 8px;
    height: ${(p) => (p.$h ? 2 : 8)}px;
    background: repeating-linear-gradient(${(p) => (p.$across ? "90deg" : "0deg")}, #8ba6dc 0 1px, #eef4fe 1px 2px);
  }
`;

const Corner = styled.span`
  background: ${FACE};
`;

const SheetTabs = styled.div`
  height: 28px;
  padding-left: 18px;
`;

const SheetTab = styled.button`
  position: relative;
  width: 78px;
  height: 26px;
  font-size: 14px;
  line-height: 28px;
  svg {
    position: absolute;
    left: 0;
    top: -1px;
  }
  span { position: relative; }
`;

/* ---------- lower docks ---------- */

const Docks = styled.div`
  display: flex;
  flex: none;
  height: 128px;
  border-top: 1px solid #000;
`;

const Dock = styled.section<{ $basis?: number }>`
  display: flex;
  flex: ${(p) => (p.$basis ? `0 1 ${p.$basis}px` : "1")};
  min-width: 0;
  padding: 3px 3px 0 4px;
  & + & { border-left: 1px solid #000; padding-left: 3px; }
`;

const DockRail = styled.div`
  display: flex;
  flex-direction: column;
  align-items: center;
  gap: 1px;
  flex: none;
  width: 14px;
  padding: 2px 2px 2px 0;
`;

const RailGrip = styled.span`
  flex: 1;
  width: 6px;
  border: 1px solid #b9b5a5;
  border-width: 0 1px;
  box-shadow: inset 1px 0 0 #fff, 1px 0 0 #fff;
`;

const DockBody = styled.div`
  display: flex;
  flex-direction: column;
  flex: 1;
  min-width: 0;
`;

const ListBody = styled(DockBody)`
  padding-right: 7px;
`;

const Log = styled.ul`
  flex: 1;
  border: 1px solid #000;
  background: #fff;
`;

const MENUS = ["File", "Edit", "View", "Format", "Model", "Tools", "Services", "Window", "Help"];
const NODES: [string, string, boolean][] = [
  ["Default Values", "defaults", false],
  ["Domains", "domains", true],
  ["Entities", "entities", true],
  ["Model Sources", "sources", false],
  ["Relationships", "relations", true],
  ["Subject Areas", "areas", true],
  ["Transforms", "transforms", false],
  ["Validation Rules", "rules", false],
];
const ENTITIES = [
  { name: "E/1", x: 150, y: 130, w: 78, h: 84, round: false },
  { name: "E/2", x: 337, y: 185, w: 73, h: 88, round: true },
  { name: "E/3", x: 501, y: 148, w: 86, h: 91, round: true },
];

const PlusMinus = ({ open }: { open?: boolean }) => (
  <svg width="7" height="7" viewBox="0 0 7 7" aria-hidden="true">
    <path d={open ? "M1 3.500h5" : "M1 3.500h5M3.500 1v5"} stroke="#000" />
  </svg>
);

const CloseMark = ({ color = "#000", size = 7 }: { color?: string; size?: number }) => (
  <svg width={size} height={size} viewBox="0 0 7 7" aria-hidden="true">
    <path d="M1 1l5 5M6 1L1 6" stroke={color} strokeWidth="1.200" />
  </svg>
);

const RestoreMark = ({ color }: { color: string }) => (
  <svg width="12" height="12" viewBox="0 0 12 12" aria-hidden="true">
    <path d="M4 4V1.500h7V7H8.500M1 5h7v5.500H1zM1 6h7M4 2h7" fill="none" stroke={color} strokeWidth="1.300" />
  </svg>
);

const MinMark = ({ color }: { color: string }) => (
  <svg width="12" height="12" viewBox="0 0 12 12" aria-hidden="true">
    <path d="M2 9.500h6" stroke={color} strokeWidth="2.500" />
  </svg>
);

const Rail = () => (
  <DockRail>
    <TinyButton aria-label="Close pane"><CloseMark /></TinyButton>
    <TinyButton aria-label="Collapse pane">
      <svg width="5" height="5" viewBox="0 0 5 5"><path d="M4 0v5L1 2.500z" /></svg>
    </TinyButton>
    <RailGrip />
  </DockRail>
);

export default function App() {
  return (
    <Shell>
      <Global />
      <TitleBar>
        <Icon name="appLight" size={15} />
        <Title>{"AllFusion ERwin Data Modeler by CA - [Model_1 : <Main Subject Area>*]"}</Title>
        <FrameButton aria-label="Minimize"><MinMark color="#fff" /></FrameButton>
        <FrameButton aria-label="Restore"><RestoreMark color="#fff" /></FrameButton>
        <FrameButton aria-label="Close" $danger><CloseMark color="#fff" size={14} /></FrameButton>
      </TitleBar>
      <MenuBar>
        <MenuIcon><Icon name="app" size={15} /></MenuIcon>
        {MENUS.map((m) => <MenuItem key={m}>{m}</MenuItem>)}
        <ChildButtons>
          <ChildButton aria-label="Minimize window"><MinMark color="#555" /></ChildButton>
          <ChildButton aria-label="Restore window"><RestoreMark color="#555" /></ChildButton>
          <ChildButton aria-label="Close window"><CloseMark color="#555" size={10} /></ChildButton>
        </ChildButtons>
      </MenuBar>

      <BarRow>
        <Band>
          <Grip />
          <Tools items={["newDoc", "open", "save", "|", "print", "|", "find", "replace", "|", "tableAdd", "tableIn", "|", "tagDoc", "docYellow*", "docBlue", "|", "undo", "dot", "|", "zoomOut", "zoomIn", "zoomDim", "zoomFit", "zoomArea", "|", "subject", "v", "|"]} />
          <Combo $w={111}>
            <select aria-label="Model type" defaultValue="Logical">
              <option>Logical</option>
              <option>Physical</option>
            </select>
            <ComboArrow><Chevron to="down" /></ComboArrow>
          </Combo>
        </Band>
        <Band>
          <Grip />
          <Tools items={["pointer*", "entity", "category", "relation", "relationMany", "relationDash"]} />
        </Band>
        <Band>
          <Grip />
          <Tools items={["rect", "roundRect", "ellipse", "stroke", "scribble", "polygon", "textBox"]} />
        </Band>
      </BarRow>
      <BarRow>
        <Band>
          <Grip />
          <Combo $w={170} $off>
            <select aria-label="Font name" disabled />
            <ComboArrow $off><Chevron to="down" color="#c6c3b4" /></ComboArrow>
          </Combo>
          <Combo $w={69} $off>
            <select aria-label="Font size" disabled />
            <ComboArrow $off><Chevron to="down" color="#c6c3b4" /></ComboArrow>
          </Combo>
          <Tools items={["|", "square", "square", "square", "square", "|", "textColor", "v-", "fillColor", "v", "lineColor", "v-"]} />
        </Band>
        <Band>
          <Grip />
          <Tools items={["alignTop", "alignBottom", "alignLeft", "alignRight", "|", "spaceH", "spaceV", "group", "ungroup"]} />
        </Band>
      </BarRow>
      <BarRow>
        <Band>
          <Grip />
          <Tools items={["blobA", "blobB", "|", "lock", "|", "overlap", "square", "|", "hash", "refresh", "blobC", "blobD", "|", "snake", "blobE", "|", "people"]} />
        </Band>
        <Band $offset={133}>
          <Grip />
          <Tools items={["treeBig", "tree", "treeUp", "treeDown", "colsTwo", "rowsTwo", "colDown", "colUp", "beam", "note", "diamond", "back", "cross"]} />
        </Band>
      </BarRow>

      <Workspace>
        <Explorer>
          <DockHeader>
            <DockGrip />
            <TinyButton aria-label="Pane menu">
              <svg width="5" height="5" viewBox="0 0 5 5"><path d="M0 1h5L2.500 4z" fill={DIM} /></svg>
            </TinyButton>
            <TinyButton aria-label="Close pane"><CloseMark /></TinyButton>
          </DockHeader>
          <PaneTools $h={27} $gap={2}>
            <Tools tight items={["prev", "next", "|", "inspect", "trash", "|", "findDark", "findNext", "|", "book"]} />
          </PaneTools>
          <Well $grow>
            <WellInner>
              <Tree>
                <TreeRow>
                  <Twisty aria-label="Collapse Model_1"><PlusMinus open /></Twisty>
                  <Leader $w={6} />
                  <Icon name="page" size={16} />
                  <Space $size={4} />
                  <Label $mark>Model_1</Label>
                </TreeRow>
                <Children>
                  {NODES.map(([text, icon, branch]) => (
                    <TreeRow key={text}>
                      {branch ? (
                        <ChildCell>
                          <Twisty aria-label={`Expand ${text}`}><PlusMinus /></Twisty>
                          <Leader $w={7} />
                        </ChildCell>
                      ) : (
                        <Leader $w={12} />
                      )}
                      <Icon name={icon} size={16} />
                      <Space $size={3} />
                      <Label>{text}</Label>
                    </TreeRow>
                  ))}
                </Children>
              </Tree>
            </WellInner>
          </Well>
          <Tabs>
            <Tab $on><Icon name="page" size={16} />Model</Tab>
            <Tab><Icon name="subject" size={16} />Subject Area</Tab>
          </Tabs>
        </Explorer>

        <Stage>
          <Sheet>
            <Canvas>
              <Links width="640" height="300" aria-hidden="true">
                <g fill="none" stroke="#000" shapeRendering="crispEdges">
                  <path d="M228 163.500H291.500V220.500H337" />
                  <path d="M410 220.500H446.500V160.500H501" />
                </g>
                <circle cx="332" cy="220.500" r="4.500" />
                <circle cx="496" cy="160.500" r="4.500" />
              </Links>
              {ENTITIES.map((e) => (
                <Entity key={e.name} $x={e.x} $y={e.y} $w={e.w} $h={e.h} $round={e.round}>
                  <EntityName>{e.name}</EntityName>
                  <EntityBox $round={e.round} />
                </Entity>
              ))}
            </Canvas>
            <ScrollV>
              <ScrollButton aria-label="Scroll up"><Chevron to="up" /></ScrollButton>
              <Space $size={47} />
              <Thumb aria-label="Vertical position" />
              <Space />
              <ScrollButton aria-label="Scroll down"><Chevron to="down" /></ScrollButton>
            </ScrollV>
            <ScrollH>
              <ScrollButton aria-label="Scroll left"><Chevron to="left" /></ScrollButton>
              <Space $size={1} />
              <Thumb aria-label="Horizontal position" $across />
              <Space />
              <ScrollButton aria-label="Scroll right"><Chevron to="right" /></ScrollButton>
            </ScrollH>
            <Corner />
          </Sheet>
          <SheetTabs>
            <SheetTab>
              <svg width="78" height="27" viewBox="0 0 78 27" aria-hidden="true">
                <path d="M0 .5C3 1 4 4 5 7l4 13q2 5.500 5 5.500h47q5 0 7-6l4-12q2-6 6-7" fill="#fff" stroke="#000" strokeWidth="1.200" />
                <path d="M0 0h78" stroke="#fff" />
              </svg>
              <span>Display1</span>
            </SheetTab>
          </SheetTabs>
        </Stage>
      </Workspace>

      <Docks>
        <Dock $basis={515}>
          <Rail />
          <ListBody>
            <PaneTools $h={24} $gap={6}>
              <Tools tight items={["copyPair", "|", "findDark", "findNext", "|", "listDim", "|", "inspectDim", "|", "undoDim", "redoDim", "|", "filter", "|", "book"]} />
            </PaneTools>
            <Well>
              <WellInner $h={65}>
                <Tree>
                  {[0, 1, 2, 3].map((i) => (
                    <TreeRow key={i} $bold>
                      <Twisty aria-label="Expand Set Object Location"><PlusMinus /></Twisty>
                      <Leader $w={6} />
                      <Icon name="change" size={17} />
                      <Space $size={3} />
                      <Label>Set Object Location</Label>
                    </TreeRow>
                  ))}
                </Tree>
                <ScrollV>
                  <ScrollButton aria-label="Scroll up"><Chevron to="up" /></ScrollButton>
                  <Thumb aria-label="List position" $h={9} />
                  <Space />
                  <ScrollButton aria-label="Scroll down"><Chevron to="down" /></ScrollButton>
                </ScrollV>
              </WellInner>
            </Well>
            <Tabs>
              <Tab $on><Icon name="change" size={17} />Details</Tab>
              <Tab><Icon name="triangle" size={17} />Summary</Tab>
            </Tabs>
          </ListBody>
        </Dock>
        <Dock>
          <Rail />
          <DockBody>
            <PaneTools $h={28}>
              <Tools items={["save", "folderBlue", "book"]} />
            </PaneTools>
            <Log>
              <TreeRow>
                <Icon name="check" size={18} />
                <Space $size={2} />
                <Label $mark>Set Object Location</Label>
              </TreeRow>
            </Log>
          </DockBody>
        </Dock>
      </Docks>
    </Shell>
  );
}
